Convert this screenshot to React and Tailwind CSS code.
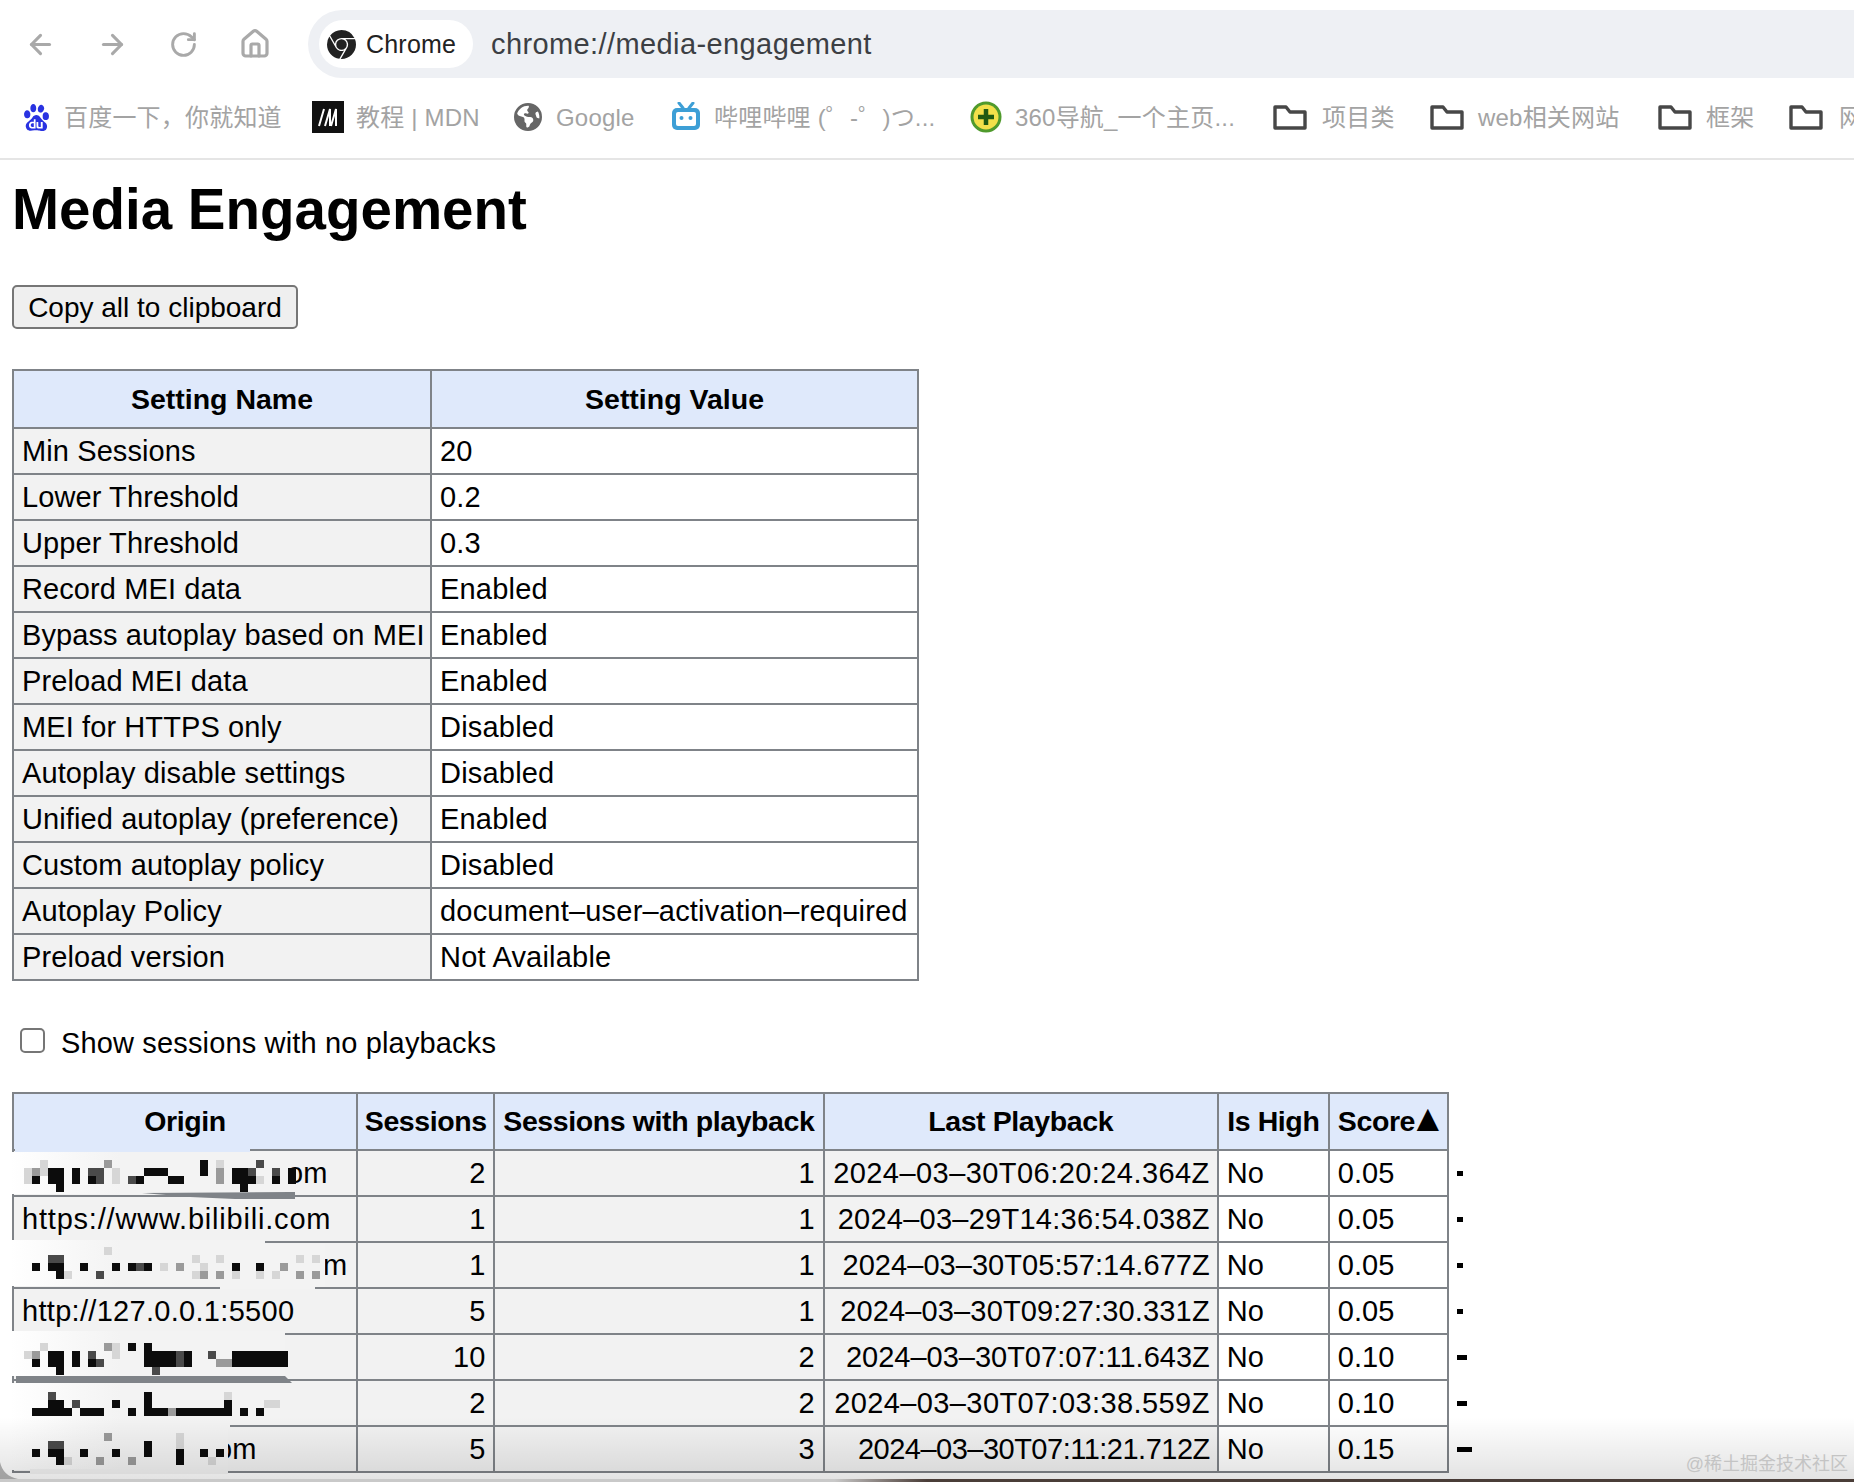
import { ArrowLeft, ArrowRight, RotateCw, House } from 'lucide-react';
import { SiGooglechrome, SiBaidu } from 'react-icons/si';
import { FaEarthAmericas } from 'react-icons/fa6';

const settings = [
  ['Min Sessions', '20'],
  ['Lower Threshold', '0.2'],
  ['Upper Threshold', '0.3'],
  ['Record MEI data', 'Enabled'],
  ['Bypass autoplay based on MEI', 'Enabled'],
  ['Preload MEI data', 'Enabled'],
  ['MEI for HTTPS only', 'Disabled'],
  ['Autoplay disable settings', 'Disabled'],
  ['Unified autoplay (preference)', 'Enabled'],
  ['Custom autoplay policy', 'Disabled'],
  ['Autoplay Policy', 'document–user–activation–required'],
  ['Preload version', 'Not Available'],
];

// origins that are blurred in the picture only keep their last letters
const sessions = [
  { tail: 'om', indent: 'pl-[265px]', count: 2, played: 1, last: '2024–03–30T06:20:24.364Z', spacing: 'tracking-[0.44px]', score: '0.05', bar: 'w-[6px]' },
  { origin: 'https://www.bilibili.com', originSpacing: 'tracking-[0.8px]', count: 1, played: 1, last: '2024–03–29T14:36:54.038Z', spacing: 'tracking-[0.25px]', score: '0.05', bar: 'w-[6px]' },
  { tail: 'm', indent: 'pl-[301px]', count: 1, played: 1, last: '2024–03–30T05:57:14.677Z', spacing: 'tracking-[0.05px]', score: '0.05', bar: 'w-[6px]' },
  { origin: 'http://127.0.0.1:5500', originSpacing: 'tracking-[0.3px]', count: 5, played: 1, last: '2024–03–30T09:27:30.331Z', spacing: 'tracking-[0.15px]', score: '0.05', bar: 'w-[6px]' },
  { count: 10, played: 2, last: '2024–03–30T07:07:11.643Z', spacing: 'tracking-[0px]', score: '0.10', bar: 'w-[10px]' },
  { count: 2, played: 2, last: '2024–03–30T07:03:38.559Z', spacing: 'tracking-[0.4px]', score: '0.10', bar: 'w-[10px]' },
  { tail: 'om', indent: 'pl-[194px]', count: 5, played: 3, last: '2024–03–30T07:11:21.712Z', spacing: 'tracking-[-0.5px]', score: '0.15', bar: 'w-[15px]' },
];

const shades = { '#': '#0c0c0c', x: '#4a4a4a', o: '#9a9a9a', '.': '#d6d6d6' };

// mosaic blocks: top y, then per 8px line a list of [start column, shades]
const mosaics = [
  { y: 1160, lines: [
    [[2, '.'], [10, 'o'], [22, '#'], [24, '.'], [29, 'x']],
    [[0, '.o.'], [3, '##'], [6, '#'], [8, 'xx'], [11, '.'], [15, '###'], [22, '#'], [24, 'o'], [26, '##'], [28, 'x'], [31, 'x'], [33, '#']],
    [[0, '.#'], [3, '##'], [6, '#'], [8, '#x'], [11, '.'], [13, 'x#'], [18, '##'], [24, 'o'], [26, '###'], [29, '.'], [31, '#'], [33, '#']],
    [[4, '#'], [27, '#']],
  ] },
  { y: 1247, lines: [
    [[10, '.']],
    [[3, 'xx'], [21, '.'], [24, '.'], [34, '.'], [36, '.']],
    [[1, '#'], [3, '##'], [7, '#'], [11, '#'], [13, '#x#'], [17, '.'], [19, 'o'], [22, '.'], [26, '#'], [29, '#'], [32, 'o']],
    [[4, '#'], [5, '.'], [9, 'x'], [21, '.o'], [24, 'o'], [26, '.'], [29, '.'], [31, '.'], [34, 'o'], [36, 'o']],
  ] },
  { y: 1343, lines: [
    [[2, '.'], [10, 'o.'], [13, '#'], [15, '#']],
    [[0, '.o'], [3, '##'], [6, '#'], [8, 'x'], [11, '.'], [15, '####x#'], [23, 'x'], [26, '#######']],
    [[1, '#'], [3, '##'], [6, '#'], [8, '#x'], [15, '####x#'], [24, 'oo'], [26, '#######']],
    [[4, '#'], [16, 'x']],
  ] },
  { y: 1392, lines: [
    [[3, 'x'], [15, '#'], [25, '.']],
    [[3, '##'], [6, 'x'], [11, '#'], [15, '#'], [25, '#'], [30, '..']],
    [[1, '#####'], [7, '###'], [13, '#'], [15, '###'], [18, 'o#'], [20, '###'], [23, '###'], [27, '#'], [29, '#']],
  ] },
  { y: 1433, lines: [
    [[10, 'o'], [19, '.']],
    [[3, 'xx'], [15, '#'], [19, '.']],
    [[1, '#'], [3, '##'], [7, '#'], [11, '#'], [15, '#'], [19, '#'], [22, '#'], [24, '#']],
    [[4, '#'], [5, '.'], [9, 'o'], [13, 'o'], [19, '#'], [23, '.']],
  ] },
];

function Bookmark({ icon, iconBox, label, width }) {
  return (
    <div className="flex items-center shrink-0">
      <div className={`${iconBox} shrink-0 flex items-center`}>{icon}</div>
      <span className={`${width} text-[24px] pt-[2px] tracking-[0.2px] text-[#a3a3a3] whitespace-nowrap`}>{label}</span>
    </div>
  );
}

function FolderIcon() {
  return (
    <svg width="34" height="26" viewBox="0 0 34 26" fill="none" stroke="#474747" strokeWidth="3.4" strokeLinejoin="round">
      <path d="M2 3h11l4 5h15v16H2z" />
    </svg>
  );
}

function MdnIcon() {
  return (
    <svg width="32" height="32" viewBox="0 0 32 32">
      <rect width="32" height="32" fill="#111" />
      <path d="M7 25 12 8M13 25 18 8v17M19 25 24 8v17" stroke="#fff" strokeWidth="2" fill="none" />
    </svg>
  );
}

function BiliIcon() {
  return (
    <svg width="32" height="30" viewBox="0 0 32 30">
      <path d="M9 1l4 5M23 1l-4 5" stroke="#3d9fd6" strokeWidth="3" strokeLinecap="round" />
      <rect x="2" y="6" width="28" height="22" rx="5" fill="#3d9fd6" />
      <rect x="6" y="10" width="20" height="14" rx="2" fill="#fff" />
      <circle cx="11.5" cy="16" r="2" fill="#3d9fd6" />
      <circle cx="20.5" cy="16" r="2" fill="#3d9fd6" />
    </svg>
  );
}

function Icon360() {
  return (
    <svg width="32" height="32" viewBox="0 0 32 32">
      <circle cx="16" cy="16" r="15.5" fill="#4f9a2c" />
      <circle cx="16" cy="16" r="12.5" fill="#f2e04a" />
      <path d="M16 8v16M8 16h16" stroke="#1f5a12" strokeWidth="4.5" />
    </svg>
  );
}

function Redactions() {
  return (
    <svg width="1854" height="1482" viewBox="0 0 1854 1482" className="absolute top-0 left-0 pointer-events-none">
      <defs>
        <linearGradient id="fade" gradientUnits="userSpaceOnUse" x1="10" x2="120" y1="0" y2="0">
          <stop offset="0" stopColor="#ffffff" />
          <stop offset="1" stopColor="#f3f3f3" />
        </linearGradient>
      </defs>
      <rect x="15" y="1147" width="235" height="5" fill="#dfe9fb" />
      <rect x="10" y="1152" width="280" height="42" fill="url(#fade)" />
      <path d="M142 1193 290 1192 295 1192V1199H235L190 1197z" fill="#7f8388" />
      <rect x="10" y="1240" width="255" height="46" fill="url(#fade)" />
      <rect x="265" y="1244" width="60" height="43" fill="#f3f3f3" />
      <rect x="220" y="1285" width="95" height="4" fill="#f3f3f3" />
      <rect x="10" y="1331" width="275" height="45" fill="url(#fade)" />
      <path d="M16 1376H285L292 1383H16z" fill="#7f8388" />
      <rect x="10" y="1383" width="270" height="42" fill="url(#fade)" />
      <rect x="10" y="1424" width="220" height="5" fill="url(#fade)" />
      <rect x="10" y="1429" width="218" height="41" fill="url(#fade)" />
      <rect x="30" y="1469" width="198" height="5" fill="#f3f3f3" />
      {mosaics.map((block) =>
        block.lines.map((runs, line) =>
          runs.map(([start, cells]) =>
            [...cells].map((cell, i) => (
              <rect key={`${block.y}-${line}-${start}-${i}`} x={24 + (start + i) * 8} y={block.y + line * 8} width="8" height="8" fill={shades[cell]} />
            ))
          )
        )
      )}
      <path d="M0 1462Q3 1476 18 1479H0z" fill="#b5b5b5" />
    </svg>
  );
}

export default function App() {
  return (
    <div className="relative w-[1854px] h-[1482px] overflow-hidden bg-white text-black font-['Liberation_Sans','Noto_Sans_CJK_SC',sans-serif]">
      {/* Browser toolbar */}
      <div className="h-[160px] border-b-2 border-[#e5e5e5] flex flex-col">
        <div className="flex items-center h-[88px] pt-[10px] pb-[10px]">
          <div className="flex items-center w-[308px] pl-[25px] gap-[41px] text-[#a9a9a9]">
            <ArrowLeft size={31} strokeWidth={2.4} />
            <ArrowRight size={31} strokeWidth={2.4} />
            <RotateCw size={29} strokeWidth={2.4} />
            <House size={32} strokeWidth={2.4} />
          </div>
          <div className="flex-1 h-[68px] bg-[#eef0f4] rounded-l-[34px] flex items-center pl-[11px]">
            <div className="h-[48px] w-[154px] bg-white rounded-full flex items-center pl-[8px] gap-[10px]">
              <SiGooglechrome size={29} className="text-[#222]" />
              <span className="text-[25px] pt-[2px] font-medium text-[#222] tracking-[0.2px]">Chrome</span>
            </div>
            <span className="ml-[18px] text-[29px] pt-[2px] text-[#3c3f44] tracking-[0.4px]">chrome://media-engagement</span>
          </div>
        </div>
        <div className="flex items-center pl-[23px] h-[58px]">
          <Bookmark icon={<SiBaidu size={27} className="text-[#2932e1]" />} iconBox="w-[41px]" label="百度一下，你就知道" width="w-[248px]" />
          <Bookmark icon={<MdnIcon />} iconBox="w-[44px]" label="教程 | MDN" width="w-[158px]" />
          <Bookmark icon={<FaEarthAmericas size={28} className="text-[#666]" />} iconBox="w-[42px]" label="Google" width="w-[114px]" />
          <Bookmark icon={<BiliIcon />} iconBox="w-[44px]" label="哔哩哔哩 (゜-゜)つ..." width="w-[256px]" />
          <Bookmark icon={<Icon360 />} iconBox="w-[45px]" label="360导航_一个主页..." width="w-[258px]" />
          <Bookmark icon={<FolderIcon />} iconBox="w-[49px]" label="项目类" width="w-[108px]" />
          <Bookmark icon={<FolderIcon />} iconBox="w-[48px]" label="web相关网站" width="w-[180px]" />
          <Bookmark icon={<FolderIcon />} iconBox="w-[48px]" label="框架" width="w-[83px]" />
          <Bookmark icon={<FolderIcon />} iconBox="w-[50px]" label="网" width="w-[24px]" />
        </div>
      </div>

      {/* Page */}
      <div className="pl-[12px] text-[29px]">
        <h1 className="mt-[16px] h-[68px] text-[56.5px] leading-[68px] font-bold">Media Engagement</h1>

        <button className="mt-[41px] block w-[286px] h-[44px] pt-[2px] bg-[#efefef] border-2 border-[#767676] rounded-[5px] text-[28px] leading-none">
          Copy all to clipboard
        </button>

        <table className="mt-[40px] table-fixed border-collapse w-[907px]">
          <colgroup>
            <col className="w-[418px]" />
            <col className="w-[487px]" />
          </colgroup>
          <thead>
            <tr className="h-[58px]">
              <th className="border-2 border-[#7f8388] bg-[#dfe9fb] text-[28.5px] font-semibold">Setting Name</th>
              <th className="border-2 border-[#7f8388] bg-[#dfe9fb] text-[28.5px] font-semibold">Setting Value</th>
            </tr>
          </thead>
          <tbody>
            {settings.map(([name, value]) => (
              <tr key={name} className="h-[46px]">
                <td className="border-2 border-[#7f8388] bg-[#f2f2f2] px-[8px] leading-[38px] tracking-[0.1px] whitespace-nowrap">{name}</td>
                <td className="border-2 border-[#7f8388] px-[8px] leading-[38px] tracking-[0.2px] whitespace-nowrap">{value}</td>
              </tr>
            ))}
          </tbody>
        </table>

        <label className="mt-[47px] h-[32px] flex items-center tracking-[0.15px]">
          <span className="ml-[8px] mb-[8px] w-[25px] h-[25px] border-2 border-[#767676] rounded-[5px] bg-white shrink-0" />
          <span className="ml-[16px]">Show sessions with no playbacks</span>
        </label>

        <table className="mt-[32px] table-fixed border-collapse w-[1499px]">
          <colgroup>
            <col className="w-[344px]" />
            <col className="w-[137px]" />
            <col className="w-[329px]" />
            <col className="w-[394px]" />
            <col className="w-[111px]" />
            <col className="w-[119px]" />
            <col className="w-[63px]" />
          </colgroup>
          <thead>
            <tr className="h-[57px]">
              {['Origin', 'Sessions', 'Sessions with playback', 'Last Playback', 'Is High'].map((title) => (
                <th key={title} className="border-2 border-[#7f8388] bg-[#dfe9fb] text-[28.5px] font-semibold tracking-[-0.4px] whitespace-nowrap">{title}</th>
              ))}
              <th className="border-2 border-[#7f8388] bg-[#dfe9fb] pl-[8px] text-left text-[28.5px] font-semibold tracking-[-0.4px] whitespace-nowrap">
                Score<span className="-ml-[6px] text-[38px] leading-[10px]">▲</span>
              </th>
              <th />
            </tr>
          </thead>
          <tbody>
            {sessions.map((row) => (
              <tr key={row.last} className="h-[46px]">
                <td className={`border-2 border-[#7f8388] bg-[#f2f2f2] px-[8px] leading-[38px] whitespace-nowrap ${row.originSpacing || ''}`}>
                  {row.origin ? row.origin : <span className={row.indent}>{row.tail}</span>}
                </td>
                <td className="border-2 border-[#7f8388] bg-[#f2f2f2] px-[8px] leading-[38px] text-right">{row.count}</td>
                <td className="border-2 border-[#7f8388] bg-[#f2f2f2] px-[8px] leading-[38px] text-right">{row.played}</td>
                <td className={`border-2 border-[#7f8388] bg-[#f2f2f2] pl-[8px] pr-[7px] leading-[38px] text-right whitespace-nowrap ${row.spacing}`}>{row.last}</td>
                <td className="border-2 border-[#7f8388] px-[8px] leading-[38px]">No</td>
                <td className="border-2 border-[#7f8388] px-[8px] leading-[38px]">{row.score}</td>
                <td className="pl-[8px]">
                  <div className={`${row.bar} h-[5px] bg-black`} />
                </td>
              </tr>
            ))}
          </tbody>
        </table>
      </div>

      <Redactions />

      {/* Screenshot edge: soft shadow, wallpaper strip and watermark */}
      <div className="absolute left-0 right-0 bottom-[3px] h-[62px] bg-linear-to-b from-transparent to-[#0000001c]" />
      <div className="absolute left-0 right-0 bottom-0 h-[3px] bg-linear-to-r from-[#c9c9c9] from-45% to-[#4a3d38] to-50%" />
      <span className="absolute right-[6px] bottom-[6px] text-[18px] leading-[24px] text-[#c4c4c4] whitespace-nowrap">@稀土掘金技术社区</span>
    </div>
  );
}
